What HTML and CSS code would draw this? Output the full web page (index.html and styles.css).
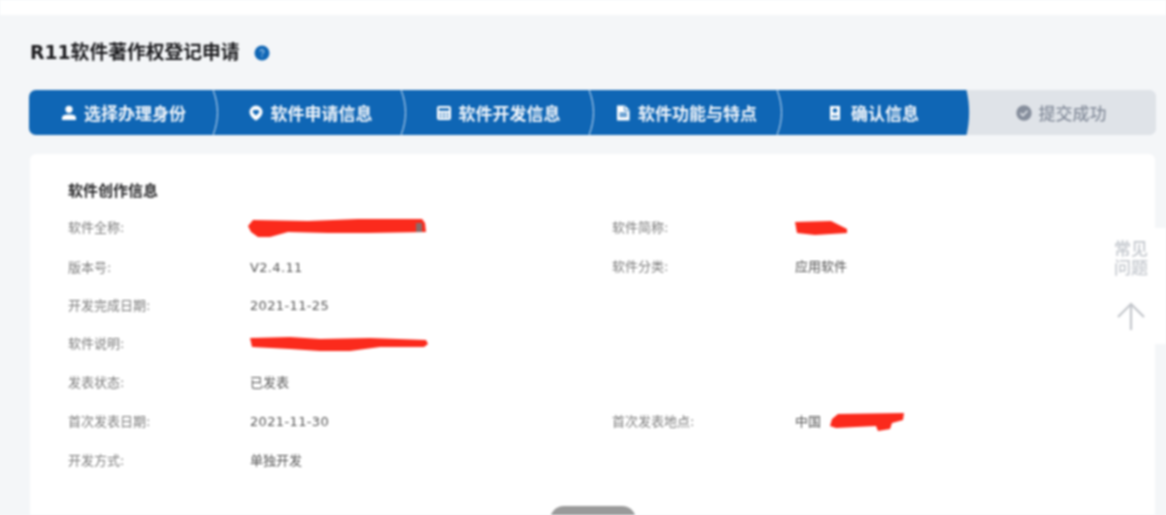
FILE: index.html
```html
<!DOCTYPE html>
<html lang="zh-CN">
<head>
<meta charset="utf-8">
<title>R11软件著作权登记申请</title>
<link rel="stylesheet" href="styles.css">
</head>
<body>
<div class="page">
  <div class="topbar"></div>
  <main class="main">
    <header class="title-row">
      <h1 class="title">R11软件著作权登记申请</h1>
      <svg class="help" viewBox="0 0 16 16"><circle cx="8" cy="8" r="7.500" fill="#0f66b5"/><path d="M6.200 6.400a1.800 1.800 0 1 1 2.700 1.600c-.6.300-.9.600-.9 1.200" fill="none" stroke="#9cc4e8" stroke-width="1.200"/><circle cx="8" cy="11.200" r=".8" fill="#9cc4e8"/></svg>
    </header>
    <ol class="steps">
      <li class="step first">
        <svg class="icon" viewBox="0 0 16 16"><circle cx="8" cy="4.300" r="3.600" fill="#fff"/><path d="M1 15v-2.200C1 10.600 3.500 9.400 8 9.400s7 1.200 7 3.400V15z" fill="#fff"/></svg>
        <span>选择办理身份</span>
        <svg class="sep" viewBox="0 0 8 45" preserveAspectRatio="none"><path d="M0 0C6 15 6 30 0 45" fill="none" stroke="#cfe2f5" stroke-width="1"/></svg>
      </li>
      <li class="step">
        <svg class="icon" viewBox="0 0 16 16"><path d="M8 .5a6.500 6.500 0 0 0-6.500 6.500C1.500 11 5.500 14 8 15.700 10.500 14 14.500 11 14.500 7A6.500 6.500 0 0 0 8 .5z" fill="#fff"/><path d="M8 10.500 5 7.500a1.900 1.900 0 0 1 3-2.200 1.900 1.900 0 0 1 3 2.200z" fill="#0f66b5"/></svg>
        <span>软件申请信息</span>
        <svg class="sep" viewBox="0 0 8 45" preserveAspectRatio="none"><path d="M0 0C6 15 6 30 0 45" fill="none" stroke="#cfe2f5" stroke-width="1"/></svg>
      </li>
      <li class="step">
        <svg class="icon" viewBox="0 0 16 16"><rect x="1" y="1" width="14" height="14" rx="2" fill="#fff"/><rect x="3" y="3.200" width="10" height="2.600" fill="#0f66b5"/><path d="M3.500 8h2v2h-2zM7 8h2v2H7zM10.500 8h2v2h-2zM3.500 11h2v2h-2zM7 11h2v2H7zM10.500 11h2v2h-2z" fill="#0f66b5" opacity=".75"/></svg>
        <span>软件开发信息</span>
        <svg class="sep" viewBox="0 0 8 45" preserveAspectRatio="none"><path d="M0 0C6 15 6 30 0 45" fill="none" stroke="#cfe2f5" stroke-width="1"/></svg>
      </li>
      <li class="step">
        <svg class="icon" viewBox="0 0 16 16"><path d="M2 .5h8l4.500 4.500v10.500H2z" fill="#fff"/><path d="M9.500 1v4.500H14" fill="none" stroke="#0f66b5" stroke-width=".8"/><path d="M4.500 8.500h7.500M4.500 11h7.500" stroke="#0f66b5" stroke-width="1.300"/></svg>
        <span>软件功能与特点</span>
        <svg class="sep" viewBox="0 0 8 45" preserveAspectRatio="none"><path d="M0 0C6 15 6 30 0 45" fill="none" stroke="#cfe2f5" stroke-width="1"/></svg>
      </li>
      <li class="step">
        <svg class="icon small" viewBox="0 0 12 16"><path d="M1 1h10v14H1z" fill="#fff"/><circle cx="6" cy="5.500" r="2.300" fill="#0f66b5"/><path d="M3 11.500h6" stroke="#0f66b5" stroke-width="1.500"/></svg>
        <span class="gap-wide">确认信息</span>
        <svg class="tip" viewBox="0 0 5 45" preserveAspectRatio="none"><path d="M0 0h.5C4 15 4 30 .5 45H0z" fill="#0f66b5"/></svg>
      </li>
      <li class="step last">
        <svg class="icon" viewBox="0 0 16 16"><circle cx="8" cy="8" r="7.700" fill="#868e9c"/><path d="M4.500 8.200 7 10.600l4.500-4.800" fill="none" stroke="#dfe3e8" stroke-width="1.600"/></svg>
        <span>提交成功</span>
      </li>
    </ol>
    <section class="card">
      <h2 class="card-title">软件创作信息</h2>
      <dl class="info">
        <dt>软件全称:</dt>
        <dd><svg class="scribble s1" viewBox="0 0 178 20"><path d="M0 8 5 2 60 3 110 1 174 1 177 5 178 14 120 15 80 15 40 14 22 19 10 19 3 14z" fill="#fb2a1c"/><path d="M168 5h6v9h-6z" fill="#8a6a68"/></svg></dd>
        <dt>软件简称:</dt>
        <dd><svg class="scribble s2" viewBox="0 0 52 16"><path d="M0 2 36 1 40 3 52 9V13L20 15 2 13z" fill="#fb2a1c"/></svg></dd>

        <dt class="shift">版本号:</dt>
        <dd class="num shift">V2.4.11</dd>
        <dt>软件分类:</dt>
        <dd>应用软件</dd>

        <dt>开发完成日期:</dt>
        <dd class="num">2021-11-25</dd>
        <dt></dt>
        <dd></dd>

        <dt>软件说明:</dt>
        <dd><svg class="scribble s3" viewBox="0 0 178 16"><path d="M0 2 40 1 70 3 120 2 176 4 178 8 174 11 130 11 100 15H70L40 13 2 11z" fill="#fb2a1c"/></svg></dd>
        <dt></dt>
        <dd></dd>

        <dt>发表状态:</dt>
        <dd>已发表</dd>
        <dt></dt>
        <dd></dd>

        <dt>首次发表日期:</dt>
        <dd class="num">2021-11-30</dd>
        <dt>首次发表地点:</dt>
        <dd class="place">中国<svg class="scribble s4" viewBox="0 0 74 20"><path d="M2 7 8 2 74 1 73 8 62 11 60 17 48 19 46 14 6 16 0 14z" fill="#fb2a1c"/></svg></dd>

        <dt>开发方式:</dt>
        <dd>单独开发</dd>
        <dt></dt>
        <dd></dd>
      </dl>
    </section>
  </main>
  <aside class="float">
    <a class="faq">常见<br>问题</a>
    <svg class="up" viewBox="0 0 30 28"><path d="M2 15 15 2l13 13M15 2v26" fill="none" stroke="#c3c6cb" stroke-width="2.200"/></svg>
  </aside>
  <div class="pill"></div>
</div>
</body>
</html>
```
FILE: styles.css
```css
* { box-sizing: border-box; }
html, body { margin: 0; height: 100%; background: #f4f6f8; overflow: hidden; }
body { font-family: "DejaVu Sans", "Noto Sans CJK SC", sans-serif; color: #555; }
.page { position: relative; width: 1166px; height: 515px; overflow: hidden; filter: blur(0.9px); background: #f4f6f8; }
.topbar { height: 15px; background: #fff; }
.main { padding: 0 10px 0 29px; }
.title-row { display: flex; align-items: center; height: 75px; gap: 15px; }
.title { margin: 0 0 0 1px; font-size: 18.800px; line-height: 24px; font-weight: 700; color: #1c1c1f; white-space: nowrap; }
.help { width: 16px; height: 16px; margin-left: -1px; }

.steps { display: flex; list-style: none; margin: 0; padding: 0; height: 45px; border-radius: 7px; overflow: hidden; background: #dfe3e8; }
.step { position: relative; flex: 0 0 188px; display: flex; align-items: center; justify-content: center; gap: 7px; padding-left: 4px; background: #0f66b5; color: #f2f6fb; font-size: 17px; font-weight: 700; }
.step.first { flex-basis: 185px; }
.step.last { flex: 1; background: #dfe3e8; color: #868e9c; padding-left: 0; font-weight: 500; }
.icon { width: 16px; height: 16px; flex: none; }
.icon.small { width: 12px; height: 16px; }
.gap-wide { margin-left: 3px; }
.sep { position: absolute; top: 0; right: -7px; width: 8px; height: 45px; z-index: 2; }
.tip { position: absolute; top: 0; left: 100%; width: 5px; height: 45px; z-index: 2; }

.card { margin: 19px 1px 0; height: 400px; background: #fff; border-radius: 6px 6px 0 0; padding: 26px 0 0 38px; }
.card-title { margin: 0; font-size: 15px; line-height: 22px; font-weight: 700; color: #2a2a2c; }
.info { display: grid; grid-template-columns: 182px 362px 183px 1fr; grid-auto-rows: 28px; row-gap: 10.8px; margin: 12px 0 0; font-size: 13px; }
dt, dd { margin: 0; display: flex; align-items: center; line-height: 28px; }
dt { color: #7c7c7c; }
dd { color: #555; }
.num { font-size: 13px; letter-spacing: .35px; }
.shift { padding-top: 3px; }
.scribble { display: block; }
.s1 { width: 178px; height: 20px; margin-left: -2px; }
.s2 { width: 52px; height: 16px; }
.s3 { width: 178px; height: 16px; }
.s4 { width: 74px; height: 20px; margin-left: 9px; }

.float { position: absolute; top: 228px; right: 0; width: 64px; height: 116px; background: #fff; border-radius: 10px 0 0 10px; padding: 12px 0 0 12px; }
.faq { display: block; font-size: 17px; line-height: 19px; color: #c4c8ce; font-weight: 500; }
.up { display: block; width: 30px; height: 28px; margin: 24px 0 0 2px; }
.pill { position: absolute; left: 550px; bottom: -30px; width: 86px; height: 39px; background: #9a9a9a; border-radius: 14px; }
```
